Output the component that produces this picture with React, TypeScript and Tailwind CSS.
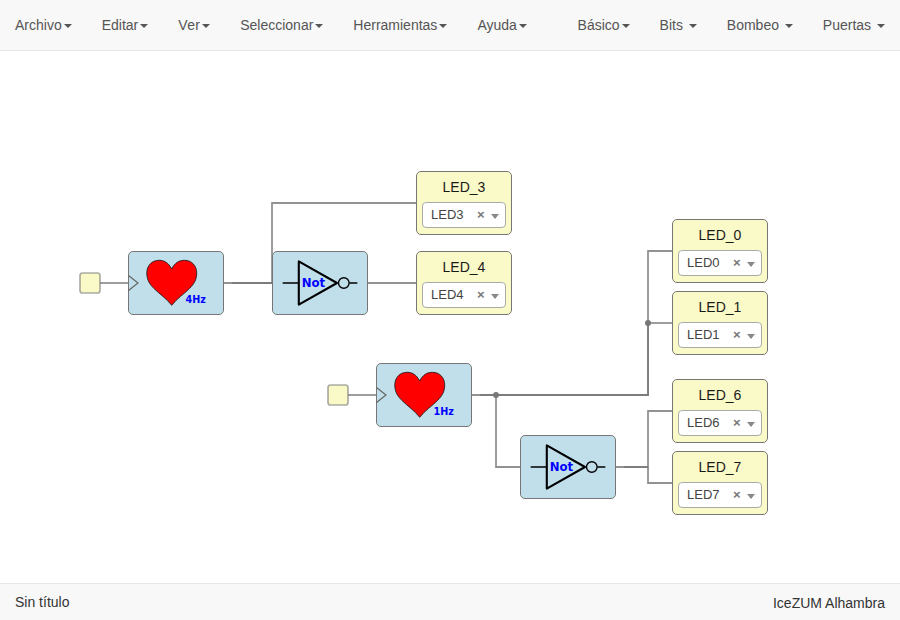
import React from "react";

const leftMenu = ["Archivo", "Editar", "Ver", "Seleccionar", "Herramientas", "Ayuda"];
const rightMenu = ["Básico", "Bits ", "Bombeo ", "Puertas "];

function MenuItem({ label }: { label: string }) {
  return (
    <li className="h-[50px] px-[15px] py-[15px] leading-5 whitespace-pre">
      <span className={label === "Ver" ? "tracking-[0.3px]" : ""}>{label}</span>
      <span className="ml-[2px] inline-block h-0 w-0 border-x-4 border-t-4 border-x-transparent border-t-[#555] align-middle" />
    </li>
  );
}

// Wires are translucent, so shared runs come out darker.
const wires = [
  "M100 232H128",
  "M224 232H272V152H416",
  "M232 232H272",
  "M368 232H416",
  "M348 344H376",
  "M472 344H648V200H672",
  "M480 344H648V272",
  "M648 272H672",
  "M496 344V416H520",
  "M616 416H648V360H672",
  "M624 416H648",
  "M648 416V432H672",
];

const blockFrame = "absolute h-16 w-24 rounded-[5px] border border-[#777]";

function Heart({ place, rate }: { place: string; rate: string }) {
  return (
    <div className={`${blockFrame} bg-[#c0dfeb] ${place}`}>
      <svg className="absolute -top-px -left-px" width="96" height="64">
        <path d="M0.5 24.5L10 32L0.5 39.5" fill="none" stroke="#666" strokeWidth="1.2" />
        <path
          d="M43.7 17.9C40.5 11.8 36.3 9.3 31 9.3C24 9.3 18.8 14.5 18.8 22C18.8 28 20.8 32.3 26 37.5C31.5 43 38.5 47.5 43.7 54.3C48.9 47.5 56 43 61.5 37.5C66.7 32.3 68.7 28 68.7 22C68.7 14.5 63.5 9.3 56.5 9.3C51 9.3 46.9 11.8 43.7 17.9Z"
          fill="#f00"
          stroke="#222"
          strokeWidth="0.9"
        />
        <text x="57.5" y="52" className="fill-[#00f] font-['DejaVu_Sans_Condensed','DejaVu_Sans',sans-serif] text-[10.7px] font-bold">
          {rate}
        </text>
      </svg>
    </div>
  );
}

function Not({ place }: { place: string }) {
  return (
    <div className={`${blockFrame} bg-[#c0dfeb] ${place}`}>
      <svg className="absolute -top-px -left-px" width="96" height="64">
        <g fill="none" stroke="#000">
          <path d="M10.7 32H26M77.3 32H85.3" strokeWidth="1.3" />
          <path d="M26.8 10.4V53.6L65 32Z" strokeWidth="2.1" strokeLinejoin="round" />
          <circle cx="71.8" cy="32" r="5.3" strokeWidth="1.4" />
        </g>
        <text x="29.7" y="36" className="fill-[#00f] font-['DejaVu_Sans',sans-serif] text-[11.7px] font-bold">
          Not
        </text>
      </svg>
    </div>
  );
}

function Led({ place, n }: { place: string; n: number }) {
  return (
    <div className={`${blockFrame} flex flex-col items-center bg-[#fafac8] pt-[5px] text-[#1a1a1a] ${place}`}>
      <div className="h-[25px] leading-5">LED_{n}</div>
      <div className="flex h-[26px] w-[84px] shrink-0 items-center rounded-[4px] border border-[#aaa] bg-white pl-2 text-[13px] leading-6 text-[#444]">
        <span className="w-[46px] shrink-0">LED{n}</span>
        <span className="w-[12px] shrink-0 text-[13px] font-bold text-[#777]">×</span>
        <span className="mt-[3px] ml-[2px] h-0 w-0 border-x-4 border-t-[5px] border-x-transparent border-t-[#888]" />
      </div>
    </div>
  );
}

export default function App() {
  return (
    <div className="flex h-[620px] w-[900px] flex-col overflow-hidden bg-white font-['Liberation_Sans',Arial,sans-serif] text-sm text-[#333]">
      <nav className="flex h-[51px] shrink-0 justify-between border-b border-[#e7e7e7] bg-[#f8f8f8] text-[#555]">
        <ul className="flex">
          {leftMenu.map((m) => <MenuItem key={m} label={m} />)}
        </ul>
        <ul className="flex">
          {rightMenu.map((m) => <MenuItem key={m} label={m} />)}
        </ul>
      </nav>
      <main className="relative flex-1">
        <svg className="absolute inset-0" width="900" height="532">
          <g fill="none" stroke="#777" strokeWidth="1.8" strokeOpacity="0.8">
            {wires.map((d) => <path key={d} d={d} />)}
          </g>
          <circle cx="496" cy="344" r="3" fill="#777" />
          <circle cx="648" cy="272" r="3" fill="#777" />
          <g fill="#fafac8" stroke="#777" strokeOpacity="0.6" strokeWidth="1.7">
            <rect x="80" y="222" width="20" height="20" rx="2.5" />
            <rect x="328" y="334" width="20" height="20" rx="2.5" />
          </g>
        </svg>
        <Heart place="left-[128px] top-[200px]" rate="4Hz" />
        <Not place="left-[272px] top-[200px]" />
        <Led place="left-[416px] top-[120px]" n={3} />
        <Led place="left-[416px] top-[200px]" n={4} />
        <Heart place="left-[376px] top-[312px]" rate="1Hz" />
        <Not place="left-[520px] top-[384px]" />
        <Led place="left-[672px] top-[168px]" n={0} />
        <Led place="left-[672px] top-[240px]" n={1} />
        <Led place="left-[672px] top-[328px]" n={6} />
        <Led place="left-[672px] top-[400px]" n={7} />
      </main>
      <footer className="flex h-[37px] shrink-0 justify-between border-t border-[#e7e7e7] bg-[#f8f8f8] px-[15px] leading-5">
        <span className="pt-2">Sin título</span>
        <span className="pt-[9px]">IceZUM Alhambra</span>
      </footer>
    </div>
  );
}
